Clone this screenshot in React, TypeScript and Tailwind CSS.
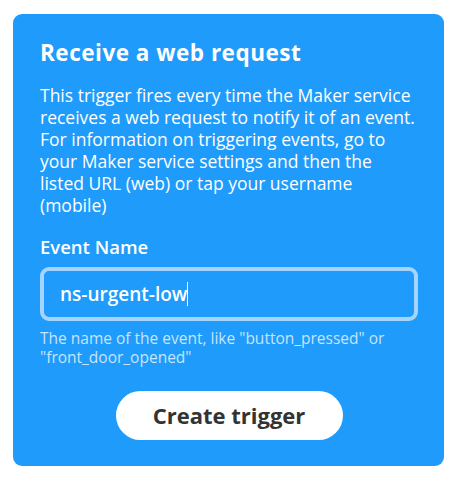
import React from "react";

export default function App() {
  return (
    <div className="w-[459px] h-[483px] bg-white pt-[14px] pl-[13px]" style={{ fontFamily: "'Open Sans', Lato, sans-serif" }}>
      <div className="w-[431px] h-[452px] rounded-[9px] bg-[#1e9bfb] pl-[27px] pr-[26px] pt-[25px] flex flex-col">
        <h1 className="text-white text-[22.5px] leading-[28px] font-bold tracking-[0.5px]">Receive a web request</h1>
        <p className="mt-[17px] text-white text-[17.5px] leading-[22px] whitespace-nowrap">
          This trigger fires every time the Maker service
          <br />
          receives a web request to notify it of an event.
          <br />
          For information on triggering events, go to
          <br />
          your Maker service settings and then the
          <br />
          listed URL (web) or tap your username
          <br />
          (mobile)
        </p>
        <div className="mt-[19px] text-white text-[18.5px] leading-[24px] font-semibold">Event Name</div>
        <div className="mt-[8px] h-[54px] w-[378px] rounded-[9px] border-[4px] border-[#a5d5fd] flex items-center pl-[16px]">
          <span className="text-white text-[19px] font-semibold">ns-urgent-low</span>
          <span className="w-px h-[24px] bg-white" />
        </div>
        <p className="mt-[8px] text-[#c6e4fd] text-[15.5px] leading-[19px] whitespace-nowrap">
          The name of the event, like "button_pressed" or
          <br />
          "front_door_opened"
        </p>
        <div className="mt-[24px] flex justify-center">
          <button className="w-[227px] h-[49px] rounded-full bg-white text-[#333333] text-[22px] font-bold">
            Create trigger
          </button>
        </div>
      </div>
    </div>
  );
}
